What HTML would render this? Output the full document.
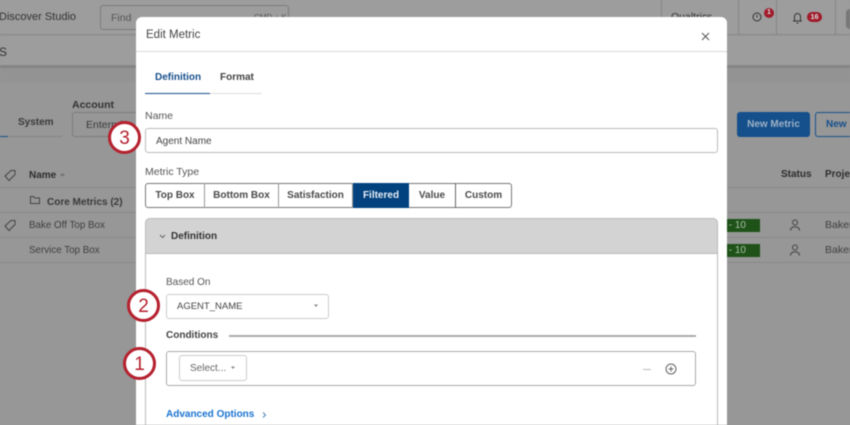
<!DOCTYPE html>
<html><head><meta charset="utf-8">
<style>
*{box-sizing:border-box}
html,body{margin:0;padding:0;width:850px;height:425px;overflow:hidden}
body{position:relative;background:#979797;font-family:"Liberation Sans",sans-serif;color:#333}
.a{position:absolute;white-space:nowrap}
#w{position:absolute;left:0;top:0;width:850px;height:425px;overflow:hidden;filter:blur(.4px)}
.t{line-height:14px}
.btn{position:absolute;top:183px;height:25px;line-height:26px;text-align:center;font-size:10px;font-weight:bold;color:#4a4a4a;border-right:1px solid #999}
.ring{position:absolute;width:33px;height:33px;border:3px solid #b5202e;border-radius:50%;background:#fff;color:#b5202e;font-size:19px;line-height:29px;text-align:center}
</style></head><body><div id="w">
<!-- background -->
<div class="a" style="left:0;top:0;width:850px;height:35px;background:#9d9d9d;border-bottom:1px solid #8a8a8a"></div>
<div class="a" style="left:0;top:36px;width:850px;height:32px;background:#9d9d9d;border-bottom:3px solid #858585"></div>
<div class="a" style="left:0;top:68px;width:850px;height:14px;background:#939393"></div>
<div class="a t" style="left:-1px;top:10px;font-size:11px;color:#333">Discover Studio</div>
<div class="a" style="left:100px;top:5px;width:189px;height:25px;border:1px solid #7d7d7d;border-radius:3px"></div>
<div class="a t" style="left:111px;top:11px;font-size:10.5px;color:#555">Find</div>
<div class="a t" style="left:254px;top:11px;font-size:8px;color:#555">CMD + K</div>
<div class="a" style="left:661px;top:0;width:1px;height:35px;background:#858585"></div>
<div class="a" style="left:738px;top:0;width:1px;height:35px;background:#858585"></div>
<div class="a" style="left:776px;top:0;width:1px;height:35px;background:#858585"></div>
<div class="a" style="left:835px;top:0;width:1px;height:35px;background:#858585"></div>
<div class="a t" style="left:671px;top:10px;font-size:10.5px;color:#333">Qualtrics</div>
<svg class="a" style="left:750px;top:8px" width="18" height="18" fill="none" stroke="#333" stroke-width="1"><circle cx="7" cy="9" r="4"/><path d="M7 7v2.500"/></svg>
<div class="a" style="left:764px;top:8px;width:10px;height:10px;border-radius:50%;background:#a11a2a;color:#ddd;font-size:7px;line-height:10px;text-align:center;font-weight:bold">1</div>
<svg class="a" style="left:790px;top:10px" width="16" height="15" fill="none" stroke="#333" stroke-width="1"><path d="M3 11h9M4.500 11V6.500a3 3 0 0 1 6 0V11M6.500 13h2"/></svg>
<div class="a" style="left:807px;top:12px;width:15px;height:10px;border-radius:5px;background:#a11a2a;color:#ddd;font-size:7.500px;line-height:10px;text-align:center;font-weight:bold">16</div>
<div class="a" style="left:846px;top:9px;width:4px;height:20px;border-radius:10px 0 0 10px;background:#777"></div>
<div class="a t" style="left:-1px;top:45px;font-size:12px;color:#333">S</div>
<div class="a t" style="left:18px;top:115px;font-size:10px;line-height:16px;font-weight:bold;color:#3a3a3a">System</div>
<div class="a" style="left:0;top:136px;width:62px;height:1px;background:#858585"></div>
<div class="a" style="left:0;top:136px;width:8px;height:1px;background:#174f8c"></div>
<div class="a t" style="left:72px;top:98px;font-size:10.5px;font-weight:bold;color:#333">Account</div>
<div class="a" style="left:72px;top:112px;width:80px;height:25px;border:1px solid #7d7d7d;border-radius:3px"></div>
<div class="a t" style="left:86px;top:118px;font-size:10.5px;color:#3a3a3a">Enterprise</div>
<div class="a" style="left:737px;top:112px;width:73px;height:25px;background:#15508c;border-radius:3px;color:#9fb2c6;font-size:10px;font-weight:bold;text-align:center;line-height:26px">New Metric</div>
<div class="a" style="left:815px;top:112px;width:35px;height:25px;border:1px solid #15508c;border-right:none;border-radius:3px 0 0 3px;color:#15508c;font-size:10px;font-weight:bold;line-height:24px;padding-left:10px;overflow:hidden">New Folder</div>
<!-- table -->
<div class="a" style="left:0;top:187px;width:850px;height:1px;background:#8a8a8a"></div>
<div class="a" style="left:0;top:212px;width:850px;height:1px;background:#8a8a8a"></div>
<div class="a" style="left:0;top:237px;width:850px;height:1px;background:#8a8a8a"></div>
<div class="a" style="left:0;top:262px;width:850px;height:1px;background:#8a8a8a"></div>
<svg class="a" style="left:3px;top:168px" width="14" height="14" fill="none" stroke="#444" stroke-width="1"><path d="M2 8L8 2.500 12 2.500 12 6.500 6 12.500Z"/></svg>
<svg class="a" style="left:3px;top:218px" width="14" height="14" fill="none" stroke="#444" stroke-width="1"><path d="M2 8L8 2.500 12 2.500 12 6.500 6 12.500Z"/></svg>
<div class="a t" style="left:29px;top:169px;font-size:10px;font-weight:bold;color:#2d2d2d">Name</div>
<svg class="a" style="left:60px;top:173px" width="5" height="4" fill="none" stroke="#555" stroke-width=".8"><path d="M.8 3L2.500 1 4.200 3"/></svg>
<svg class="a" style="left:29px;top:195px" width="12" height="10" fill="none" stroke="#444" stroke-width="1"><path d="M1.500 1.500h3l1 1.500h5v5.500h-9z"/></svg>
<div class="a t" style="left:47px;top:195px;font-size:10px;line-height:15px;font-weight:bold;color:#3a3a3a">Core Metrics (2)</div>
<div class="a t" style="left:29px;top:219px;font-size:9.8px;color:#3f3f3f">Bake Off Top Box</div>
<div class="a t" style="left:29px;top:244px;font-size:9.8px;color:#3f3f3f">Service Top Box</div>
<div class="a" style="left:700px;top:219px;width:60px;height:13px;background:#1e5218;color:#a9c0a5;font-size:10px;line-height:13px;padding-right:14px;text-align:right">0 - 10</div>
<div class="a" style="left:700px;top:244px;width:60px;height:13px;background:#1e5218;color:#a9c0a5;font-size:10px;line-height:13px;padding-right:14px;text-align:right">0 - 10</div>
<div class="a t" style="left:781px;top:168px;font-size:10px;font-weight:bold;color:#2d2d2d">Status</div>
<div class="a t" style="left:825px;top:168px;width:25px;overflow:hidden;font-size:10px;font-weight:bold;color:#2d2d2d">Project</div>
<svg class="a" style="left:788px;top:218px" width="14" height="14" fill="none" stroke="#444" stroke-width="1"><circle cx="7" cy="4.500" r="2.500"/><path d="M2.500 12.500c0-5 9-5 9 0"/></svg>
<svg class="a" style="left:788px;top:243px" width="14" height="14" fill="none" stroke="#444" stroke-width="1"><circle cx="7" cy="4.500" r="2.500"/><path d="M2.500 12.500c0-5 9-5 9 0"/></svg>
<div class="a t" style="left:825px;top:218px;width:25px;overflow:hidden;font-size:10.5px;color:#3f3f3f">Baker</div>
<div class="a t" style="left:825px;top:243px;width:25px;overflow:hidden;font-size:10.5px;color:#3f3f3f">Baker</div>
<!-- modal -->
<div class="a" style="left:136px;top:17px;width:591px;height:408px;background:#fff;border-radius:6px 6px 0 0"></div>
<div class="a" style="left:136px;top:51px;width:591px;height:1px;background:#d8d8d8"></div>
<div class="a t" style="left:146px;top:28px;font-size:11.5px;color:#444">Edit Metric</div>
<svg class="a" style="left:700px;top:31px" width="11" height="11" fill="none" stroke="#555" stroke-width="1"><path d="M2 2l7 7M9 2l-7 7"/></svg>
<div class="a t" style="left:155px;top:71px;font-size:10px;font-weight:bold;color:#174f8c">Definition</div>
<div class="a t" style="left:220px;top:71px;font-size:10px;font-weight:bold;color:#444">Format</div>
<div class="a" style="left:145px;top:93px;width:117px;height:1px;background:#ddd"></div>
<div class="a" style="left:145px;top:93px;width:65px;height:1px;background:#174f8c"></div>
<div class="a t" style="left:145px;top:109px;font-size:10.5px;color:#555">Name</div>
<div class="a" style="left:145px;top:128px;width:573px;height:25px;border:1px solid #bbb;border-radius:3px"></div>
<div class="a t" style="left:156px;top:135px;font-size:10px;color:#444">Agent Name</div>
<div class="a t" style="left:145px;top:165px;font-size:10.5px;color:#555">Metric Type</div>
<!-- segmented -->
<div class="a" style="left:145px;top:183px;width:367px;height:25px;border:1px solid #777;border-radius:3px"></div>
<div class="btn" style="left:146px;width:59px">Top Box</div>
<div class="btn" style="left:205px;width:74px">Bottom Box</div>
<div class="btn" style="left:279px;width:74px">Satisfaction</div>
<div class="btn" style="left:353px;top:183px;width:56px;background:#02427f;color:#e8eef5;border:none;line-height:26px">Filtered</div>
<div class="btn" style="left:409px;width:47px;border-right:1px solid #666">Value</div>
<div class="btn" style="left:456px;width:55px;border:none">Custom</div>
<!-- Definition panel -->
<div class="a" style="left:145px;top:218px;width:573px;height:207px;border:1px solid #bbb;border-bottom:none;border-radius:5px 5px 0 0"></div>
<div class="a" style="left:145px;top:218px;width:573px;height:36px;background:#d3d3d3;border:1px solid #bbb;border-radius:5px 5px 0 0"></div>
<svg class="a" style="left:158px;top:233px" width="9" height="7" fill="none" stroke="#666" stroke-width="1"><path d="M2 2l2.500 2.500L7 2"/></svg>
<div class="a t" style="left:171px;top:230px;font-size:10px;font-weight:bold;color:#333">Definition</div>
<div class="a t" style="left:166px;top:276px;font-size:10px;color:#555">Based On</div>
<div class="a" style="left:166px;top:294px;width:163px;height:25px;border:1px solid #ccc;border-radius:3px"></div>
<div class="a t" style="left:177px;top:300px;font-size:9.5px;color:#444">AGENT_NAME</div>
<svg class="a" style="left:313px;top:303px" width="6" height="5" fill="#888"><path d="M1 1.500h4L3 4z"/></svg>
<div class="a t" style="left:166px;top:329px;font-size:10px;font-weight:bold;color:#444">Conditions</div>
<div class="a" style="left:229px;top:335px;width:467px;height:2px;background:#aaa"></div>
<div class="a" style="left:166px;top:351px;width:530px;height:35px;border:1px solid #aaa;border-radius:3px"></div>
<div class="a" style="left:179px;top:355px;width:68px;height:26px;border:1px solid #ccc;border-radius:3px"></div>
<div class="a t" style="left:190px;top:362px;font-size:10px;color:#666">Select...</div>
<svg class="a" style="left:230px;top:365px" width="6" height="5" fill="#888"><path d="M1 1.500h4L3 4z"/></svg>
<div class="a" style="left:643px;top:369px;width:8px;height:1px;background:#bbb"></div>
<svg class="a" style="left:665px;top:363px" width="12" height="12" fill="none" stroke="#666" stroke-width="1"><circle cx="6" cy="6" r="5"/><path d="M6 3.500v5M3.500 6h5"/></svg>
<div class="a t" style="left:166px;top:408px;font-size:10px;font-weight:bold;color:#1a73d0">Advanced Options</div>
<svg class="a" style="left:261px;top:411px" width="7" height="8" fill="none" stroke="#4a7fb5" stroke-width="1"><path d="M2 1.500l2.500 2.500L2 6.500"/></svg>
<!-- rings -->
<div class="ring" style="left:108px;top:121px">3</div>
<div class="ring" style="left:127px;top:289px">2</div>
<div class="ring" style="left:123px;top:347px">1</div>
</div></body></html>
